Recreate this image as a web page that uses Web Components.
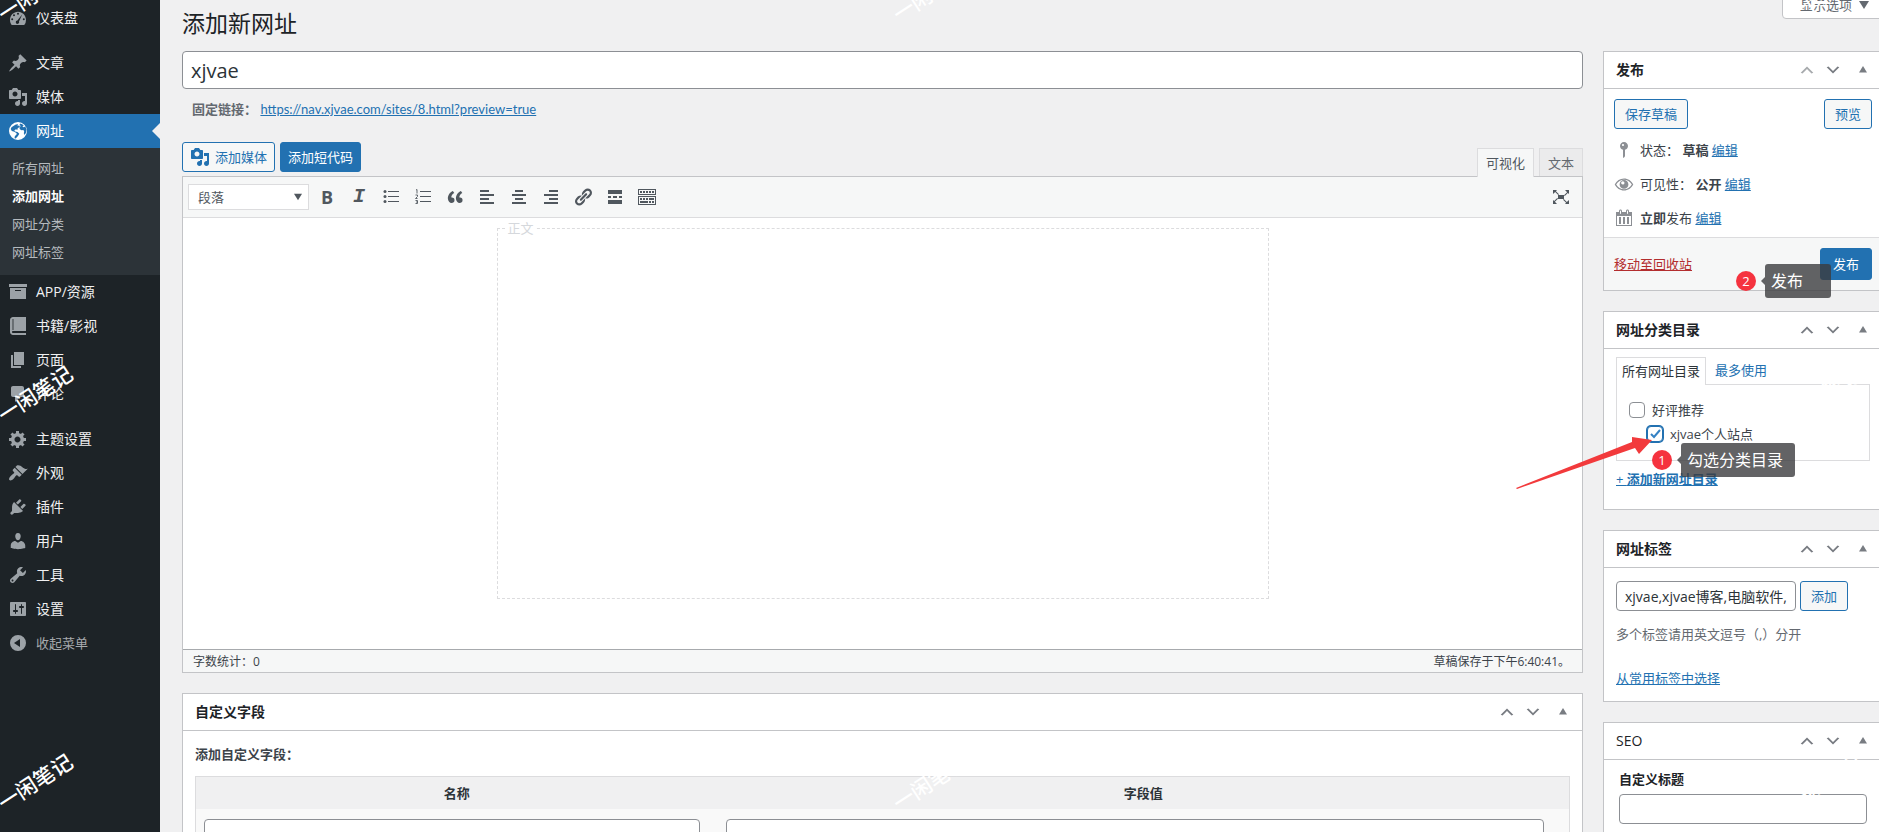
<!DOCTYPE html>
<html lang="zh-CN">
<head>
<meta charset="utf-8">
<meta name="viewport" content="width=device-width, initial-scale=1">
<title>添加新网址</title>
<style>
  body {
    margin: 0;
    height: 100vh;
    overflow: hidden;
    background: #f0f0f1;
    color: #3c434a;
    font: 13px/20px "Open Sans", "Noto Sans CJK SC", sans-serif;
  }
</style>
</head>
<body>
<admin-page></admin-page>

<script>
const icons = {
  dashboard: '<path fill-rule="evenodd" d="M3.76 17h12.48A8.2 8.2 0 0 0 18 11.9C18 7.4 14.4 3.8 10 3.8s-8 3.600-8 8.100c0 1.900.67 3.700 1.760 5.100zM10 4.800a1 1 0 1 1 0 2 1 1 0 0 1 0-2zM6 6.200a1 1 0 1 1 0 2 1 1 0 0 1 0-2zm8.300 0L11 13.500a1.700 1.700 0 1 1-1.600-1zM4.200 10.300a1 1 0 1 1 0 2 1 1 0 0 1 0-2zm11.600 0a1 1 0 1 1 0 2 1 1 0 0 1 0-2z"/>',
  post: '<path d="M10.440 3.020l1.820-1.820 6.360 6.350-1.830 1.820c-1.050-.68-2.480-.57-3.410.36l-.75.75c-.92.93-1.040 2.350-.35 3.410l-1.830 1.820-2.410-2.410-2.800 2.790c-.42.42-3.380 2.710-3.800 2.290s1.860-3.390 2.280-3.810l2.790-2.790L4.100 9.360l1.830-1.820c1.050.69 2.480.57 3.400-.36l.75-.75c.93-.92 1.050-2.350.36-3.410z"/>',
  media: '<path d="M13 11V4c0-.55-.45-1-1-1h-1.670L9 1H5L3.670 3H2c-.55 0-1 .45-1 1v7c0 .55.45 1 1 1h10c.55 0 1-.45 1-1zM7 4.500c1.380 0 2.500 1.120 2.500 2.500S8.380 9.500 7 9.500 4.500 8.380 4.500 7 5.620 4.500 7 4.500zM14 6h5v10.500c0 1.380-1.120 2.500-2.500 2.500S14 17.880 14 16.500s1.120-2.500 2.500-2.500c.17 0 .34.02.5.05V9h-3V6zm-4 8.050V13h2v3.500c0 1.380-1.120 2.500-2.500 2.500S7 17.880 7 16.500 8.120 14 9.500 14c.17 0 .34.02.5.05z"/>',
  globe: '<path fill-rule="evenodd" d="M10 1a9 9 0 1 1 0 18 9 9 0 0 1 0-18zM3.500 6.200L2.700 8l1.100 1.900 2.600.9 2.300 1.400-.3 1.500-1.500 1.300-.4 2.300 1.200.2 2.300-2.500 1.300-2.300-1.800-1.600-2.400-.7-.8-1.200 1.700-.9 1.300.6.4-1.700 2.200-1.500-.6-1.200-1.800.2.4-1.800-2.600.8zM12.400 2.500l-.9 1.300 1.200 1.100-1.300 1.800.5 1.500 1.600 1 1.900-.2.800 1.600-.4 1.600.8 1.800a7.500 7.500 0 0 0 .7-8.500l-1.700.7-1.200-.7 1.300-1.100a7 7 0 0 0-3.300-1.900z"/>',
  archive: '<path fill-rule="evenodd" d="M19 2v3H1V2zM2 6h16v11H2zm5 2v1h6V8z"/>',
  book: '<path fill-rule="evenodd" d="M5 1h13v14H5c-.55 0-1 .45-1 1s.45 1 1 1h13v2H5c-1.660 0-3-1.340-3-3V4c0-1.660 1.340-3 3-3zm-.4 2v11h.8V3z"/>',
  page: '<path d="M6 15V2h10v13H6zm-1 1h8v2H3V5h2v11z"/>',
  comment: '<path d="M5 2h9c1.100 0 2 .9 2 2v7c0 1.100-.9 2-2 2h-2l-5 5v-5H5c-1.100 0-2-.9-2-2V4c0-1.100.9-2 2-2z"/>',
  gear: '<path d="M18 12h-2.180c-.17.7-.44 1.350-.81 1.930l1.540 1.540-2.100 2.100-1.540-1.540c-.58.36-1.230.63-1.910.79V19H8v-2.180c-.68-.16-1.330-.43-1.910-.79l-1.540 1.540-2.120-2.120 1.540-1.540c-.36-.58-.63-1.230-.79-1.910H1V9.030h2.170c.16-.7.44-1.350.8-1.940L2.430 5.550l2.100-2.100 1.540 1.540c.58-.37 1.240-.64 1.930-.81V2h3v2.180c.68.16 1.330.43 1.910.79l1.540-1.540 2.120 2.120-1.540 1.540c.36.59.64 1.240.8 1.940H18V12zm-8.500 1.500c1.660 0 3-1.340 3-3s-1.340-3-3-3-3 1.340-3 3 1.340 3 3 3z"/>',
  brush: '<path d="M14.480 11.060L7.410 3.990l1.500-1.500c.5-.56 2.300-.47 3.510.32 1.210.8 1.430 1.280 2.910 2.100 1.180.64 2.450 1.260 4.450.85zm-.71.71L6.700 4.700 4.930 6.470c-.39.39-.39 1.020 0 1.410l1.060 1.060c.39.39.39 1.030 0 1.420-.6.6-1.430 1.110-2.210 1.690-.35.26-.7.53-1.010.84C1.430 14.230.4 16.080 1.400 17.070c.99 1 2.840-.03 4.180-1.360.31-.31.58-.66.85-1.020.57-.78 1.080-1.610 1.690-2.210.39-.39 1.020-.39 1.410 0l1.060 1.060c.39.39 1.020.39 1.410 0z"/>',
  plug: '<path d="M13.110 4.360L9.870 7.600 8 5.730l3.240-3.240c.35-.34 1.050-.2 1.560.32.52.51.66 1.210.31 1.550zm-8 1.770l.91-1.120 9.010 9.010-1.190.84c-.71.71-2.630 1.160-3.820 1.160H6.140L4.900 17.260c-.59.59-1.540.59-2.120 0-.59-.58-.59-1.530 0-2.120l1.240-1.240v-3.880c0-1.130.4-3.190 1.090-3.890zm7.260 3.970l3.240-3.240c.34-.35 1.040-.21 1.550.31.52.51.66 1.210.31 1.550l-3.240 3.250z"/>',
  user: '<path d="M10 9.250c-2.270 0-2.730-3.440-2.730-3.440C7 4.020 7.820 2 9.970 2c2.160 0 2.980 2.020 2.710 3.810 0 0-.41 3.440-2.680 3.440zm0 2.570L12.720 10c2.390 0 4.520 2.330 4.520 4.530v2.490s-3.650 1.130-7.240 1.130c-3.650 0-7.240-1.130-7.240-1.130v-2.490c0-2.250 1.940-4.480 4.470-4.480z"/>',
  wrench: '<path d="M16.680 9.770c-1.340 1.340-3.300 1.670-4.950.99l-5.410 6.520c-.99.99-2.590.99-3.580 0s-.99-2.590 0-3.570l6.520-5.420c-.68-1.650-.35-3.610.99-4.950 1.280-1.280 3.120-1.620 4.720-1.060l-2.890 2.890 2.820 2.820 2.860-2.870c.53 1.580.18 3.390-1.080 4.650zM3.810 16.210c.4.39 1.040.39 1.430 0 .4-.4.4-1.040 0-1.430-.39-.4-1.030-.4-1.430 0-.39.39-.39 1.030 0 1.430z"/>',
  settings: '<path d="M18 16V4c0-.55-.45-1-1-1H3c-.55 0-1 .45-1 1v12c0 .55.45 1 1 1h14c.55 0 1-.45 1-1zM8 11h1c.55 0 1 .45 1 1s-.45 1-1 1H8v1.500c0 .28-.22.5-.5.5s-.5-.22-.5-.5V13H6c-.55 0-1-.45-1-1s.45-1 1-1h1V5.500c0-.28.22-.5.5-.5s.5.22.5.5V11zm5-2h-1c-.55 0-1-.45-1-1s.45-1 1-1h1V5.500c0-.28.22-.5.5-.5s.5.22.5.5V7h1c.55 0 1 .45 1 1s-.45 1-1 1h-1v5.500c0 .28-.22.5-.5.5s-.5-.22-.5-.5V9z"/>',
  collapse: '<path fill-rule="evenodd" d="M10 2a8 8 0 1 1 0 16 8 8 0 0 1 0-16zm2 4l-6 4 6 4z"/>',
  up: '<path d="M15 14l-5-5-5 5-2-1 7-7 7 7z"/>',
  down: '<path d="M5 6l5 5 5-5 2 1-7 7-7-7z"/>',
  toggle: '<path d="M5 13l5-8 5 8z"/>',
  drop: '<path d="M5 6l5 8 5-8z"/>',
  ul: '<path d="M7 4h11v1H7zm0 5h11v1H7zm0 5h11v1H7z"/><circle cx="4" cy="4.500" r="1.500"/><circle cx="4" cy="9.500" r="1.500"/><circle cx="4" cy="14.500" r="1.500"/>',
  ol: '<path d="M7 4h11v1H7zm0 5h11v1H7zm0 5h11v1H7z"/><path d="M3 3l1-.5v4M2.500 8h2v1.500l-2 2h2M2.500 13.500h2v3h-2m.5-1.500h1.500" fill="none" stroke="currentColor" stroke-width=".9"/>',
  quote: '<path d="M9.490 13.220c0-.74-.2-1.380-.61-1.900-.62-.78-1.830-.88-2.530-.72-.29-1.650 1.110-3.750 2.920-4.650L7.880 4c-2.730 1.300-5.420 4.280-4.960 8.050C3.210 14.430 4.590 16 6.540 16c.85 0 1.560-.25 2.120-.75s.83-1.180.83-2.030zm8.050 0c0-.74-.2-1.380-.61-1.900-.63-.78-1.830-.88-2.530-.72-.29-1.650 1.110-3.750 2.920-4.650L15.930 4c-2.730 1.300-5.410 4.280-4.950 8.050.29 2.380 1.660 3.950 3.610 3.950.85 0 1.560-.25 2.120-.75s.83-1.180.83-2.030z"/>',
  left: '<path d="M3 3h9v2H3zm0 4h14v2H3zm0 4h9v2H3zm0 4h14v2H3z"/>',
  center: '<path d="M6 3h8v2H6zM3 7h14v2H3zm3 4h8v2H6zm-3 4h14v2H3z"/>',
  right: '<path d="M8 3h9v2H8zM3 7h14v2H3zm5 4h9v2H8zm-5 4h14v2H3z"/>',
  link: '<path d="M17.740 2.760c1.680 1.690 1.680 4.410 0 6.100l-1.530 1.520c-1.120 1.120-2.700 1.470-4.140 1.090l2.620-2.610.76-.77.76-.76c.84-.84.84-2.200 0-3.040-.84-.85-2.200-.85-3.040 0l-.77.76-3.380 3.380c-.37-1.440-.02-3.020 1.100-4.140l1.520-1.530c1.690-1.680 4.420-1.680 6.100 0zM8.590 13.430l5.340-5.340c.42-.42.42-1.100 0-1.520-.44-.43-1.130-.39-1.530 0l-5.330 5.340c-.42.42-.42 1.100 0 1.520.44.43 1.130.39 1.520 0zm-.76 2.290l4.140-4.150c.38 1.440.03 3.020-1.090 4.140l-1.520 1.530c-1.690 1.680-4.410 1.680-6.100 0-1.680-1.680-1.680-4.420 0-6.100l1.530-1.520c1.120-1.120 2.700-1.470 4.140-1.100l-4.140 4.150c-.85.84-.85 2.200 0 3.050.84.84 2.200.84 3.040 0z"/>',
  more: '<path d="M17 7V3H3v4h14zM6 11V9H3v2h3zm6 0V9H8v2h4zm5 0V9h-3v2h3zm0 6v-4H3v4h14z"/>',
  keyboard: '<path d="M19 2v6H1V2h18zm-1 5V3H2v4h16zM5 4v2H3V4h2zm3 0v2H6V4h2zm3 0v2H9V4h2zm3 0v2h-2V4h2zm3 0v2h-2V4h2zm2 5v9H1V9h18zm-1 8v-7H2v7h16zM5 11v2H3v-2h2zm3 0v2H6v-2h2zm3 0v2H9v-2h2zm6 0v2h-5v-2h5zm-6 3v2H3v-2h8zm3 0v2h-2v-2h2zm3 0v2h-2v-2h2z"/>',
  expand: '<path d="M7 8h6v4H7zM2 3h4L4.900 4.200 8 7.200l-.8.800-3-3.100L2 7zm12 0h4v4l-1.200-1.100-3 3.100-.8-.8 3.100-3zM2 13l1.200 1.100 3-3.100.8.8-3.100 3L6 17H2zm16 0v4h-4l1.100-1.200-3.100-3 .8-.8 3 3.100z"/>',
  pin: '<path d="M14 6c0 1.860-1.280 3.410-3 3.860V16c0 1-2 2-2 2V9.860c-1.720-.45-3-2-3-3.860 0-2.210 1.790-4 4-4s4 1.790 4 4zM8 5c0 .55.45 1 1 1s1-.45 1-1-.45-1-1-1-1 .45-1 1z"/>',
  eye: '<path fill-rule="evenodd" d="M10 4.500c4 0 7.300 2.300 9.300 6-2 3.700-5.300 6-9.300 6s-7.300-2.300-9.300-6c2-3.700 5.300-6 9.300-6zm0 1.200C6.800 5.700 4 7.600 2.200 10.500 4 13.400 6.800 15.300 10 15.300s6-1.900 7.800-4.800C16 7.600 13.200 5.700 10 5.700z"/><path fill-rule="evenodd" d="M10 6a4.400 4.400 0 1 1 0 8.800A4.400 4.400 0 0 1 10 6zm-1.200 1.200A1.700 1.700 0 1 0 10.500 9 1.700 1.700 0 0 0 8.800 7.200z"/>',
  calendar: '<path d="M15 4h3v14H2V4h3V3c0-.83.67-1.500 1.500-1.500S8 2.170 8 3v1h4V3c0-.83.67-1.500 1.500-1.500S15 2.170 15 3v1zM6 3v2.500c0 .28.22.5.5.5s.5-.22.5-.5V3c0-.28-.22-.5-.5-.5S6 2.720 6 3zm7 0v2.500c0 .28.22.5.5.5s.5-.22.5-.5V3c0-.28-.22-.5-.5-.5s-.5.22-.5.5zm4 14V8H3v9h14zM7 16V9H5v7h2zm4 0V9H9v7h2zm4 0V9h-2v7h2z"/>'
}

// estilos comunes a los paneles
const base = `
  * { box-sizing: border-box; }
  a { color: #2271b1; }
  p { margin: 0; }
  b { font-weight: 600; }
  input[type=text] {
    display: block;
    height: 30px;
    padding: 0 8px;
    border: 1px solid #8c8f94;
    border-radius: 4px;
    background: #fff;
    color: #2c3338;
    font: 14px/28px "Open Sans", "Noto Sans CJK SC", sans-serif;
  }
`

class BaseElement extends HTMLElement {
  constructor() {
    super()
    this.attachShadow({ mode: 'open' })
  }

  connectedCallback() {
    this.shadowRoot.innerHTML = `<style>${base}${this.styles()}</style>${this.render()}`
  }

  styles() { return ':host { display: block; }' }
  render() { return '<slot></slot>' }
}

class WpIcon extends BaseElement {
  styles() {
    return `
      :host { display: block; flex: none; width: 20px; height: 20px; }
      svg { display: block; width: 100%; height: 100%; fill: currentColor; }
    `
  }
  render() {
    return `<svg viewBox="0 0 20 20" aria-hidden="true">${icons[this.getAttribute('name')]}</svg>`
  }
}
customElements.define('wp-icon', WpIcon)

class WpButton extends BaseElement {
  styles() {
    return `
      :host { display: block; flex: none; }
      button {
        display: flex;
        align-items: center;
        gap: 5px;
        height: 30px;
        padding: 0 10px;
        border: 1px solid #2271b1;
        border-radius: 3px;
        background: #f6f7f7;
        color: #2271b1;
        font: inherit;
        white-space: nowrap;
      }
      :host([primary]) button { background: #2271b1; color: #fff; }
      :host([tight]) button { padding: 0 7px; }
      :host([large]) button { height: 32px; padding: 0 12px; }
    `
  }
  render() { return '<button type="button"><slot></slot></button>' }
}
customElements.define('wp-button', WpButton)

class MenuItem extends BaseElement {
  styles() {
    return `
      :host { display: block; }
      a {
        position: relative;
        display: flex;
        align-items: center;
        gap: 8px;
        height: 34px;
        padding-left: 8px;
        color: #f0f0f1;
        font-size: 14px;
        text-decoration: none;
      }
      wp-icon { color: #9ca2a7; }
      :host([current]) a { background: #2271b1; color: #fff; }
      :host([current]) wp-icon { color: #fff; }
      :host([current]) a::after {
        content: "";
        position: absolute;
        right: 0;
        border: 8px solid transparent;
        border-right-color: #f0f0f1;
        border-left-width: 0;
      }
      :host([muted]) a { color: #a7aaad; font-size: 13px; }
    `
  }
  render() {
    return `<a href="#"><wp-icon name="${this.getAttribute('icon')}"></wp-icon><slot></slot></a>`
  }
}
customElements.define('menu-item', MenuItem)

class AdminMenu extends BaseElement {
  styles() {
    return `
      :host { display: block; flex: none; width: 160px; padding-top: 1px; background: #1d2327; }
      hr { height: 5px; margin: 0 0 6px; border: 0; }
      .submenu { padding: 6px 0 9px; background: #2c3338; }
      .submenu a {
        display: block;
        padding: 4px 12px;
        color: #b5babe;
        text-decoration: none;
      }
      .submenu a.current { color: #fff; font-weight: 600; }
    `
  }
  render() {
    return `
      <nav>
        <menu-item icon="dashboard">仪表盘</menu-item>
        <hr>
        <menu-item icon="post">文章</menu-item>
        <menu-item icon="media">媒体</menu-item>
        <menu-item icon="globe" current>网址</menu-item>
        <div class="submenu">
          <a href="#">所有网址</a>
          <a href="#" class="current">添加网址</a>
          <a href="#">网址分类</a>
          <a href="#">网址标签</a>
        </div>
        <menu-item icon="archive">APP/资源</menu-item>
        <menu-item icon="book">书籍/影视</menu-item>
        <menu-item icon="page">页面</menu-item>
        <menu-item icon="comment">评论</menu-item>
        <hr>
        <menu-item icon="gear">主题设置</menu-item>
        <menu-item icon="brush">外观</menu-item>
        <menu-item icon="plug">插件</menu-item>
        <menu-item icon="user">用户</menu-item>
        <menu-item icon="wrench">工具</menu-item>
        <menu-item icon="settings">设置</menu-item>
        <menu-item icon="collapse" muted>收起菜单</menu-item>
      </nav>
    `
  }
}
customElements.define('admin-menu', AdminMenu)

class PostBox extends BaseElement {
  styles() {
    return `
      :host { display: block; border: 1px solid #c3c4c7; background: #fff; }
      header {
        display: flex;
        align-items: center;
        height: 37px;
        padding: 0 4px 0 12px;
        border-bottom: 1px solid #c3c4c7;
      }
      h2 { flex: 1; margin: 0; color: #1d2327; font-size: 14px; line-height: 20px; font-weight: 600; }
      :host([plain]) h2 { font-weight: 400; }
      button { width: 26px; height: 36px; padding: 0 3px; border: 0; background: none; color: #787c82; }
      button:last-child { margin-left: 5px; }
      :host([first]) button:first-of-type { color: #a7aaad; }
      wp-icon { width: 18px; height: 18px; }
      button:last-child wp-icon { width: 16px; height: 16px; }
    `
  }
  render() {
    return `
      <header>
        <h2>${this.getAttribute('heading')}</h2>
        <button type="button" aria-label="上移"><wp-icon name="up"></wp-icon></button>
        <button type="button" aria-label="下移"><wp-icon name="down"></wp-icon></button>
        <button type="button" aria-label="切换面板"><wp-icon name="toggle"></wp-icon></button>
      </header>
      <slot></slot>
    `
  }
}
customElements.define('post-box', PostBox)

class TitleField extends BaseElement {
  styles() {
    return `
      :host { display: block; }
      input[type=text] { width: 100%; height: 38px; font-size: 20px; }
      p { padding: 10px; color: #646970; }
      a { font-family: Lato, sans-serif; }
    `
  }
  render() {
    return `
      <input type="text" aria-label="标题" value="xjvae">
      <p><b>固定链接：</b> <a href="#">https://nav.xjvae.com/sites/8.html?preview=true</a></p>
    `
  }
}
customElements.define('title-field', TitleField)

class RichEditor extends BaseElement {
  styles() {
    return `
      :host { display: block; }
      .tools { display: flex; align-items: flex-start; gap: 5px; height: 34px; }
      .tabs { display: flex; gap: 5px; margin-left: auto; align-self: flex-end; }
      .tabs button {
        position: relative;
        height: 28px;
        padding: 0 8px;
        border: 1px solid #dcdcde;
        border-bottom: 0;
        background: #ebebec;
        color: #646970;
        font: inherit;
      }
      .tabs button.active { margin-bottom: -1px; height: 29px; background: #f6f7f7; color: #50575e; }
      .frame { border: 1px solid #c3c4c7; background: #fff; }
      .toolbar {
        display: flex;
        align-items: center;
        gap: 4px;
        height: 41px;
        padding: 0 7px 0 5px;
        border-bottom: 1px solid #dcdcde;
        background: #f6f7f7;
        color: #50575e;
      }
      .format { display: flex; align-items: center; }
      select {
        appearance: none;
        width: 121px;
        height: 26px;
        padding: 0 9px;
        border: 1px solid #dcdcde;
        border-radius: 0;
        background: #fff;
        color: #50575e;
        font: inherit;
      }
      .format wp-icon { width: 16px; height: 16px; margin-left: -19px; margin-right: 3px; pointer-events: none; }
      .toolbar button {
        display: grid;
        place-items: center;
        width: 28px;
        height: 28px;
        padding: 0;
        border: 0;
        background: none;
        color: inherit;
        font: bold 18px/20px "Open Sans", sans-serif;
      }
      .toolbar button.italic { font: italic bold 20px/20px "Liberation Mono", monospace; }
      .toolbar button:last-child { margin-left: auto; }
      .area { height: 431px; padding: 1px 16px 0; }
      .area fieldset {
        max-width: 772px;
        height: 380px;
        margin: 0 auto;
        padding: 0;
        border: 1px dashed #dcdcde;
      }
      legend { margin-left: 8px; padding: 0 2px; color: #d5d8dc; line-height: 18px; }
      footer {
        display: flex;
        justify-content: space-between;
        padding: 2px 12px 0 10px;
        border-top: 1px solid #a7aaad;
        background: #f6f7f7;
        font-size: 12px;
        line-height: 20px;
      }
    `
  }
  render() {
    const names = ['ul', 'ol', 'quote', 'left', 'center', 'right', 'link', 'more', 'keyboard', 'expand']
    return `
      <div class="tools">
        <wp-button tight><wp-icon name="media"></wp-icon>添加媒体</wp-button>
        <wp-button primary tight>添加短代码</wp-button>
        <div class="tabs">
          <button type="button" class="active">可视化</button>
          <button type="button">文本</button>
        </div>
      </div>
      <div class="frame">
        <div class="toolbar">
          <div class="format">
            <select aria-label="段落格式"><option>段落</option></select>
            <wp-icon name="drop"></wp-icon>
          </div>
          <button type="button">B</button>
          <button type="button" class="italic">I</button>
          ${names.map(name => `<button type="button" aria-label="${name}"><wp-icon name="${name}"></wp-icon></button>`).join('')}
        </div>
        <div class="area"><fieldset><legend>正文</legend></fieldset></div>
        <footer><span>字数统计：0</span><span>草稿保存于下午6:40:41。</span></footer>
      </div>
    `
  }
}
customElements.define('rich-editor', RichEditor)

class CustomFields extends BaseElement {
  styles() {
    return `
      :host { display: block; }
      .inside { padding: 13px 12px; }
      p { margin-bottom: 12px; font-weight: 600; }
      table {
        width: 100%;
        table-layout: fixed;
        border: 1px solid #dcdcde;
        border-spacing: 0;
        background: #f9f9f9;
      }
      th { height: 32px; padding: 0; background: #f0f0f1; color: #2c3338; font-weight: 600; }
      th:first-child { width: 38%; }
      td { padding: 10px 8px 8px; vertical-align: top; }
      input[type=text] { width: 98%; }
      textarea {
        display: block;
        width: 98%;
        height: 52px;
        border: 1px solid #8c8f94;
        border-radius: 4px;
        resize: none;
      }
    `
  }
  render() {
    return `
      <post-box heading="自定义字段">
        <div class="inside">
          <p>添加自定义字段：</p>
          <table>
            <tr><th>名称</th><th>字段值</th></tr>
            <tr>
              <td><input type="text" aria-label="名称"></td>
              <td><textarea aria-label="字段值"></textarea></td>
            </tr>
          </table>
        </div>
      </post-box>
    `
  }
}
customElements.define('custom-fields', CustomFields)

class PublishPanel extends BaseElement {
  styles() {
    return `
      :host { display: block; }
      .actions { display: flex; justify-content: space-between; padding: 10px 10px 4px; }
      .row { display: flex; align-items: center; gap: 6px; height: 34px; padding: 0 10px; }
      .row wp-icon { color: #8c8f94; }
      footer {
        display: flex;
        align-items: center;
        justify-content: space-between;
        margin-top: 2px;
        padding: 10px;
        border-top: 1px solid #dcdcde;
        background: #f6f7f7;
      }
      footer a { color: #b32d2e; }
    `
  }
  render() {
    return `
      <post-box heading="发布" first>
        <div class="actions">
          <wp-button>保存草稿</wp-button>
          <wp-button>预览</wp-button>
        </div>
        <div class="row"><wp-icon name="pin"></wp-icon><span>状态： <b>草稿</b> <a href="#">编辑</a></span></div>
        <div class="row"><wp-icon name="eye"></wp-icon><span>可见性： <b>公开</b> <a href="#">编辑</a></span></div>
        <div class="row"><wp-icon name="calendar"></wp-icon><span><b>立即</b>发布 <a href="#">编辑</a></span></div>
        <footer>
          <a href="#">移动至回收站</a>
          <wp-button primary large>发布</wp-button>
        </footer>
      </post-box>
    `
  }
}
customElements.define('publish-panel', PublishPanel)

class CategoryPanel extends BaseElement {
  styles() {
    return `
      :host { display: block; }
      .inside { padding: 8px 12px 20px; }
      .tabs { display: flex; }
      .tabs a { height: 27px; padding: 3px 9px; text-decoration: none; }
      .tabs a.active {
        position: relative;
        height: 28px;
        margin-bottom: -1px;
        padding: 3px 5px;
        border: 1px solid #dcdcde;
        border-bottom: 0;
        background: #fff;
        color: #2c3338;
      }
      .list { height: 77px; margin-bottom: 8px; padding: 12px; border: 1px solid #dcdcde; }
      label { display: flex; align-items: center; gap: 7px; height: 25px; }
      label.child { padding-left: 18px; height: 24px; }
      input {
        appearance: none;
        width: 16px;
        height: 16px;
        margin: 0;
        border: 1px solid #8c8f94;
        border-radius: 4px;
        background: #fff;
      }
      .child input { border-color: #2271b1; box-shadow: 0 0 0 1px #2271b1; }
      .box { display: grid; }
      .box > * { grid-area: 1 / 1; }
      svg { width: 16px; height: 16px; fill: none; stroke: #3582c4; stroke-width: 2; pointer-events: none; }
    `
  }
  render() {
    return `
      <post-box heading="网址分类目录">
        <div class="inside">
          <div class="tabs"><a href="#" class="active">所有网址目录</a><a href="#">最多使用</a></div>
          <div class="list">
            <label><input type="checkbox">好评推荐</label>
            <label class="child">
              <span class="box"><input type="checkbox" checked><svg viewBox="0 0 16 16"><path d="M4 8l3 3 6-7"/></svg></span>
              xjvae个人站点
            </label>
          </div>
          <p><a href="#">+ <b>添加新网址目录</b></a></p>
        </div>
      </post-box>
    `
  }
}
customElements.define('category-panel', CategoryPanel)

class TagsPanel extends BaseElement {
  styles() {
    return `
      :host { display: block; }
      .inside { padding: 13px 12px; }
      .add { display: flex; gap: 4px; }
      .add input[type=text] { width: 180px; }
      p { margin-top: 13px; color: #646970; }
      p + p { margin-top: 24px; }
    `
  }
  render() {
    return `
      <post-box heading="网址标签">
        <div class="inside">
          <div class="add">
            <input type="text" aria-label="添加标签" value="xjvae,xjvae博客,电脑软件,系统">
            <wp-button>添加</wp-button>
          </div>
          <p>多个标签请用英文逗号（,）分开</p>
          <p><a href="#">从常用标签中选择</a></p>
        </div>
      </post-box>
    `
  }
}
customElements.define('tags-panel', TagsPanel)

class SeoPanel extends BaseElement {
  styles() {
    return `
      :host { display: block; }
      .inside { padding: 9px 15px 20px; }
      label { display: block; margin-bottom: 5px; color: #1d2327; font-weight: 600; }
      input[type=text] { width: 100%; }
    `
  }
  render() {
    return `
      <post-box heading="SEO" plain>
        <div class="inside">
          <label for="seo-title">自定义标题</label>
          <input type="text" id="seo-title">
        </div>
      </post-box>
    `
  }
}
customElements.define('seo-panel', SeoPanel)

// globo con numero, va encima de los paneles
class NoteCallout extends BaseElement {
  styles() {
    return `
      :host { position: absolute; display: flex; align-items: center; gap: 5px; color: #fff; font-size: 16px; line-height: 24px; }
      .number { width: 20px; border-radius: 50%; background: #f5333f; font-size: 13px; line-height: 20px; text-align: center; }
      .arrow { border: 4px solid transparent; border-right-color: rgba(60, 60, 62, .8); border-left-width: 0; }
      .text { min-width: 66px; margin-left: -5px; padding: 5px 12px 5px 6px; border-radius: 3px; background: rgba(60, 60, 62, .8); }
    `
  }
  render() {
    return `
      <span class="number">${this.getAttribute('number')}</span>
      <span class="arrow"></span>
      <span class="text"><slot></slot></span>
    `
  }
}
customElements.define('note-callout', NoteCallout)

class WaterMark extends BaseElement {
  styles() {
    return `
      :host {
        position: absolute;
        color: #fff;
        font-size: 21px;
        line-height: 24px;
        font-weight: 500;
        white-space: nowrap;
        transform: translate(-50%, -50%) rotate(-33deg);
        pointer-events: none;
      }
    `
  }
  render() { return '一闲笔记' }
}
customElements.define('water-mark', WaterMark)

class AdminPage extends BaseElement {
  styles() {
    return `
      :host { position: relative; display: flex; height: 100%; overflow: hidden; }
      main { flex: 1; min-width: 0; padding-left: 22px; margin-right: -4px; }
      .head { display: flex; align-items: flex-start; justify-content: space-between; height: 51px; }
      h1 { margin: 0; padding-top: 7px; color: #1d2327; font-size: 23px; line-height: 32px; font-weight: 400; }
      .head button {
        display: flex;
        align-items: center;
        gap: 2px;
        height: 28px;
        margin-top: -9px;
        padding: 0 8px 0 17px;
        border: 1px solid #c3c4c7;
        border-radius: 0 0 4px 4px;
        background: #fff;
        color: #646970;
        font: inherit;
      }
      .columns { display: flex; align-items: flex-start; gap: 20px; }
      .primary { flex: 1; min-width: 0; }
      .side { position: relative; flex: none; width: 280px; display: grid; gap: 20px; }
      rich-editor { margin: 13px 0 20px; }
      .step-one { left: 49px; top: 392px; }
      .step-two { left: 133px; top: 213px; }
      .pointer { position: absolute; left: -87px; top: 384px; width: 140px; height: 56px; fill: #f23a3c; }
    `
  }
  render() {
    const rows = [-7, 394, 782]
    const marks = [35, 930, 1824].flatMap(x => rows.map(y => [x, y])).filter(([x, y]) => x !== 930 || y !== 394)
    return `
      <admin-menu></admin-menu>
      <main>
        <div class="head">
          <h1>添加新网址</h1>
          <button type="button">显示选项 <wp-icon name="drop"></wp-icon></button>
        </div>
        <div class="columns">
          <div class="primary">
            <title-field></title-field>
            <rich-editor></rich-editor>
            <custom-fields></custom-fields>
          </div>
          <div class="side">
            <publish-panel></publish-panel>
            <category-panel></category-panel>
            <tags-panel></tags-panel>
            <seo-panel></seo-panel>
            <svg class="pointer" viewBox="0 0 140 56" aria-hidden="true"><path d="M0 53l116-46 0-5 20 3-13 14-4-6L1 54z"/></svg>
            <note-callout class="step-one" number="1">勾选分类目录</note-callout>
            <note-callout class="step-two" number="2">发布</note-callout>
          </div>
        </div>
      </main>
      ${marks.map(([x, y]) => `<water-mark style="left: ${x}px; top: ${y}px"></water-mark>`).join('')}
    `
  }
}
customElements.define('admin-page', AdminPage)
</script>
</body>
</html>
